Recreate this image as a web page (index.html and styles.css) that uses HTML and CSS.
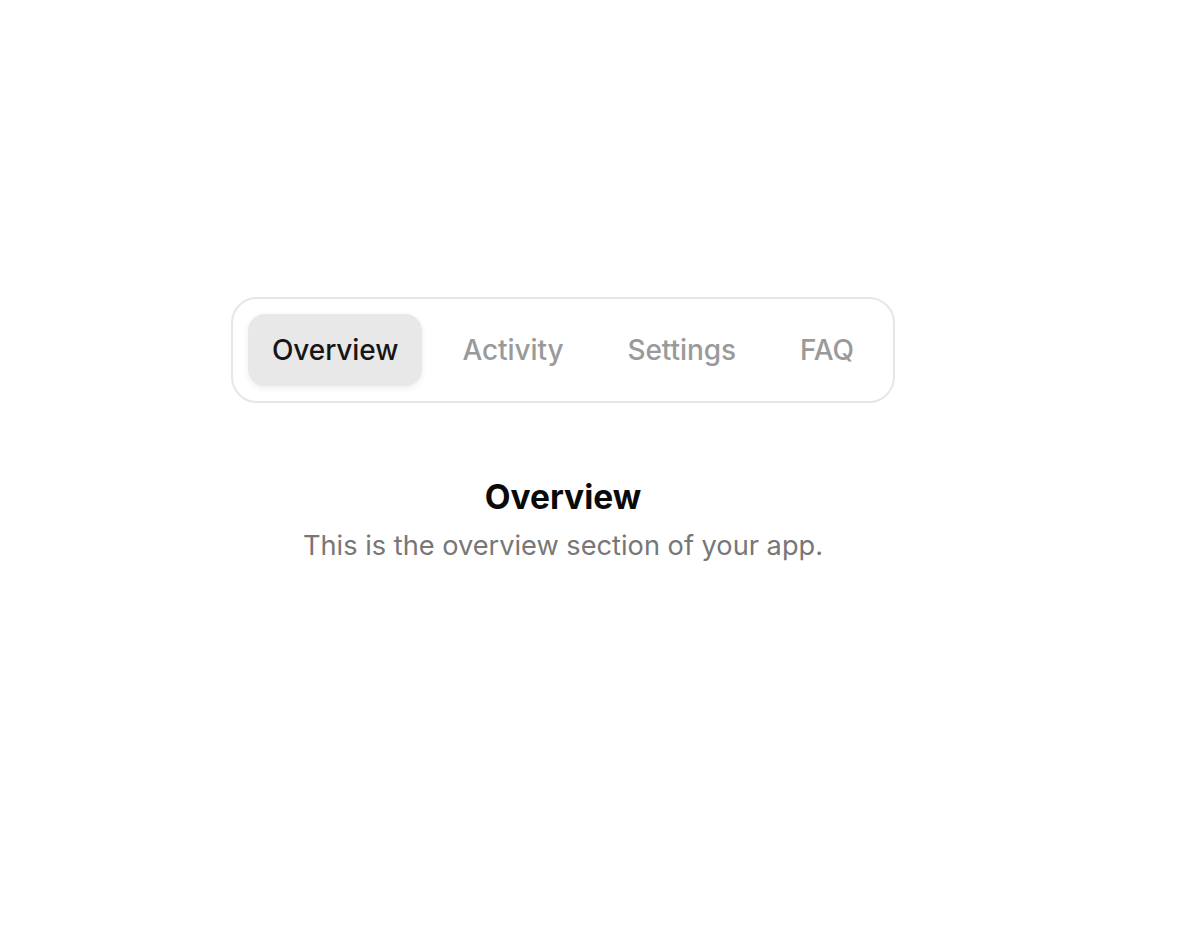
FILE: index.html
```html
<!DOCTYPE html>
<html lang="en">
<head>
<meta charset="utf-8">
<title>Tabs</title>
<link rel="stylesheet" href="styles.css">
</head>
<body>
<main class="page">
  <nav class="tabs">
    <button class="tab active">Overview</button>
    <button class="tab">Activity</button>
    <button class="tab">Settings</button>
    <button class="tab">FAQ</button>
  </nav>
  <section class="panel">
    <h2 class="panel-title">Overview</h2>
    <p class="panel-text">This is the overview section of your app.</p>
  </section>
</main>
</body>
</html>
```

FILE: styles.css
```css
* { box-sizing: border-box; }
html, body { margin: 0; padding: 0; background: #ffffff; }
body {
  font-family: Inter, "Noto Sans", "Liberation Sans", sans-serif;
  width: 1192px;
  height: 928px;
}
.page {
  display: flex;
  flex-direction: column;
  align-items: center;
  padding-top: 297px;
  padding-right: 66px;
}
.tabs {
  display: flex;
  gap: 16px;
  padding: 15px;
  border: 2px solid #e6e6e6;
  border-radius: 26px;
}
.tab {
  font-family: inherit;
  font-size: 28px;
  font-weight: 500;
  letter-spacing: -0.08px;
  color: #9a9a9a;
  background: transparent;
  border: none;
  border-radius: 17px;
  height: 72px;
  padding: 0 24px;
  cursor: pointer;
}
.tab.active {
  background: #e8e8e8;
  color: #161616;
  box-shadow: 0 2px 6px rgba(0,0,0,0.08);
}
.panel {
  margin-top: 74px;
  text-align: center;
}
.panel-title {
  margin: 0;
  font-size: 33.5px;
  font-weight: 700;
  color: #0a0a0a;
  line-height: 1.2;
}
.panel-text {
  margin: 10px 0 0;
  font-size: 27.2px;
  font-weight: 400;
  color: #777777;
  line-height: 1.4;
}
```
